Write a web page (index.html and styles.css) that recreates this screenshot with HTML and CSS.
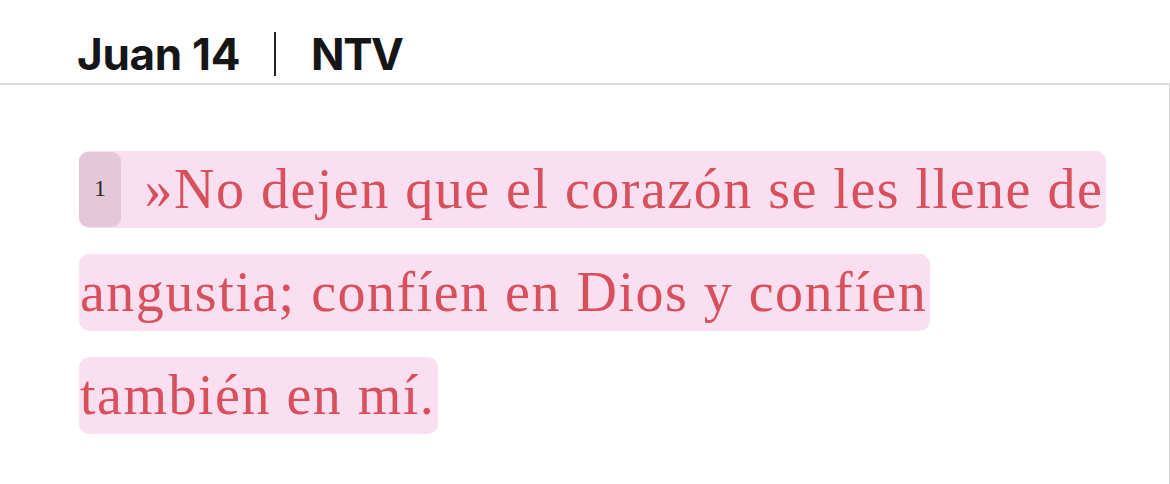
FILE: index.html
```html
<!DOCTYPE html>
<html lang="es">
<head>
    <meta charset="UTF-8">
    <meta name="viewport" content="width=device-width, initial-scale=1.0">
    <title>Juan 14 NTV</title>
    <link rel="stylesheet" href="styles.css">
</head>
<body>
    <header class="chapter-bar">
        <span class="chapter-name">Juan 14</span>
        <span class="chapter-sep"></span>
        <span class="chapter-version">NTV</span>
    </header>
    <main class="reader">
        <p class="verse">
            <span class="verse-highlight"><span class="verse-num">1</span> »No dejen que el corazón se les llene de angustia; confíen en Dios y confíen también en mí.</span>
        </p>
    </main>
</body>
</html>
```

FILE: styles.css
```css
/* 全局 */
* {
    box-sizing: border-box;
    margin: 0;
    padding: 0;
}
html, body {
    height: 100%;
    background: #fff;
    overflow: hidden;
}

/* 顶部章节栏 */
.chapter-bar {
    display: flex;
    align-items: center;
    height: 85px;
    padding: 24px 0 0 77px;
    border-bottom: 2px solid #dadada;
    font-family: Inter, 'Liberation Sans', sans-serif;
    font-size: 44px;
    font-weight: 700;
    letter-spacing: -0.3px;
    color: #161616;
}
.chapter-sep {
    width: 2px;
    height: 44px;
    margin: 0 35px 0 34px;
    background: #222;
}
.chapter-version {
    letter-spacing: -1.5px;
}

/* 经文 */
.reader {
    height: calc(100% - 85px);
    padding: 53px 0 0 79px;
    border-right: 1px solid #cfcfcf;
}
.verse {
    max-width: 1035px;
    font-family: 'Liberation Serif', serif;
    font-size: 56px;
    letter-spacing: 1.5px;
    line-height: 103px;
    color: #d9505d;
}
.verse-highlight {
    background: #f9dff0;
    padding: 7px 3px 8px 1px;
    border-radius: 10px;
    -webkit-box-decoration-break: clone;
    box-decoration-break: clone;
}
.verse-num {
    display: inline-block;
    width: 42px;
    height: 75px;
    margin: 14px 8px 0 -1px;
    vertical-align: top;
    background: #e4c7d9;
    border-radius: 9px;
    font-size: 24px;
    letter-spacing: 0;
    line-height: 73px;
    text-align: center;
    color: #2b2b2b;
}
```
